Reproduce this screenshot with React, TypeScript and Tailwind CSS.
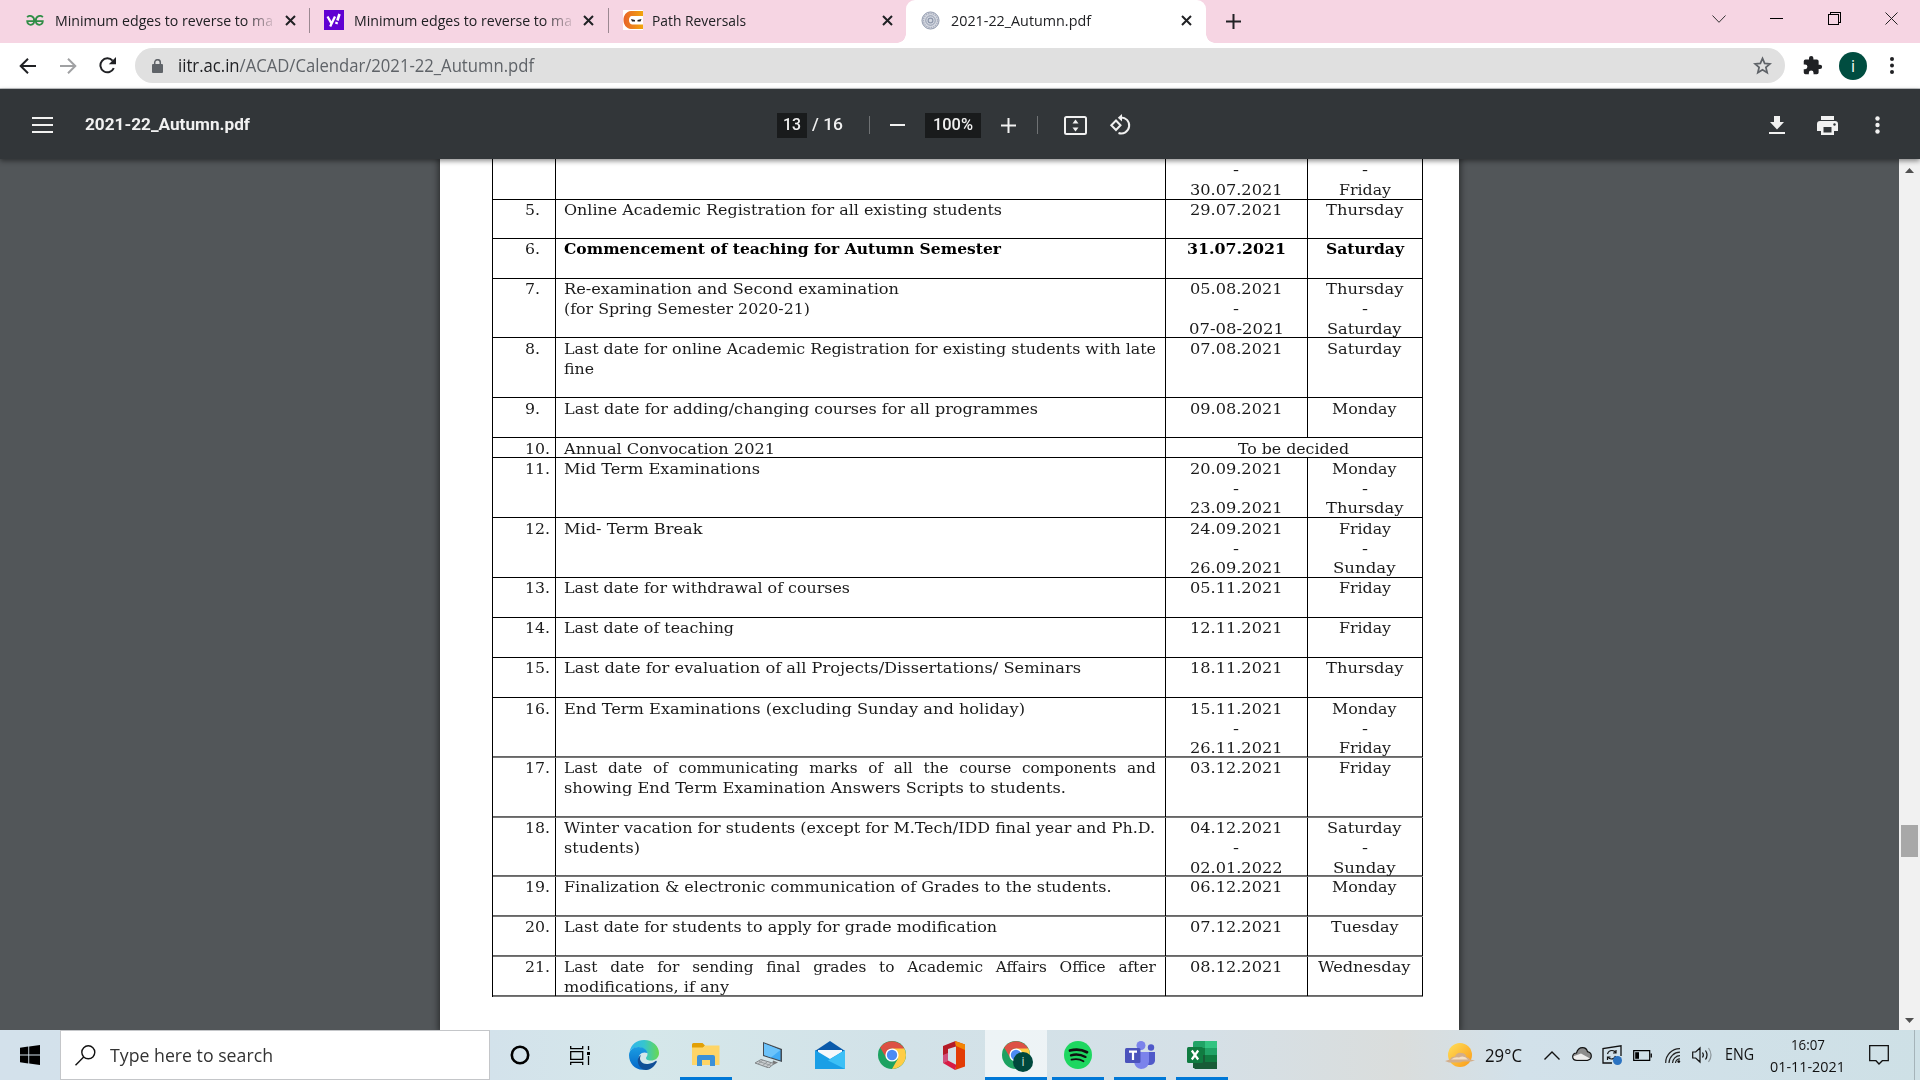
import { useLayoutEffect, useRef, useState, type ReactNode } from "react";

/* Text whose glyphs are condensed or widened so that the line is exactly `w` pixels long. */
function Fit({ w, className = "", children }: { w: number; className?: string; children: ReactNode }) {
  const ref = useRef<HTMLSpanElement>(null);
  const [scale, setScale] = useState(1);
  useLayoutEffect(() => {
    const el = ref.current;
    if (!el) return;
    const prev = el.style.transform;
    el.style.transform = "none";
    const natural = el.getBoundingClientRect().width;
    el.style.transform = prev;
    if (natural > 0) setScale(w / natural);
  }, [w]);
  return (
    <span className={"inline-block whitespace-nowrap text-left " + className} style={{ width: w }}>
      <span ref={ref} className="inline-block origin-left" style={{ transform: `scaleX(${scale})` }}>
        {children}
      </span>
    </span>
  );
}

type Line = { t: string; w: number; justify?: boolean };
type Row = { n: string; h: number; desc: Line[]; dates: string[]; days: string[]; bold?: boolean; soft?: boolean; merged?: boolean; low?: boolean };

const dayWidths: Record<string, number> = {
  Monday: 64.5,
  Tuesday: 67.5,
  Wednesday: 92.5,
  Thursday: 77.5,
  Friday: 52,
  Saturday: 74.5,
  Sunday: 62.5,
  "-": 6,
};

const rows: Row[] = [
  { n: "", h: 61, low: true, desc: [{ t: "Orientation programme for newly admitted students", w: 421 }], dates: ["29.07.2021", "-", "30.07.2021"], days: ["Thursday", "-", "Friday"] },
  { n: "5.", h: 39, desc: [{ t: "Online Academic Registration for all existing students", w: 438 }], dates: ["29.07.2021"], days: ["Thursday"] },
  { n: "6.", h: 40, bold: true, desc: [{ t: "Commencement of teaching for Autumn Semester", w: 437 }], dates: ["31.07.2021"], days: ["Saturday"] },
  { n: "7.", h: 59, desc: [{ t: "Re-examination and Second examination", w: 335 }, { t: "(for Spring Semester 2020-21)", w: 246 }], dates: ["05.08.2021", "-", "07-08-2021"], days: ["Thursday", "-", "Saturday"] },
  { n: "8.", h: 60, low: true, desc: [{ t: "Last date for online Academic Registration for existing students with late", w: 592 }, { t: "fine", w: 30 }], dates: ["07.08.2021"], days: ["Saturday"] },
  { n: "9.", h: 40, low: true, desc: [{ t: "Last date for adding/changing courses for all programmes", w: 474 }], dates: ["09.08.2021"], days: ["Monday"] },
  { n: "10.", h: 20, low: true, merged: true, desc: [{ t: "Annual Convocation 2021", w: 211 }], dates: ["To be decided"], days: [] },
  { n: "11.", h: 60, low: true, desc: [{ t: "Mid Term Examinations", w: 196 }], dates: ["20.09.2021", "-", "23.09.2021"], days: ["Monday", "-", "Thursday"] },
  { n: "12.", h: 60, low: true, desc: [{ t: "Mid- Term Break", w: 138.5 }], dates: ["24.09.2021", "-", "26.09.2021"], days: ["Friday", "-", "Sunday"] },
  { n: "13.", h: 40, desc: [{ t: "Last date for withdrawal of courses", w: 286 }], dates: ["05.11.2021"], days: ["Friday"] },
  { n: "14.", h: 40, desc: [{ t: "Last date of teaching", w: 170 }], dates: ["12.11.2021"], days: ["Friday"] },
  { n: "15.", h: 40, desc: [{ t: "Last date for evaluation of all Projects/Dissertations/ Seminars", w: 517 }], dates: ["18.11.2021"], days: ["Thursday"] },
  { n: "16.", h: 60, soft: true, low: true, desc: [{ t: "End Term Examinations (excluding Sunday and holiday)", w: 461 }], dates: ["15.11.2021", "-", "26.11.2021"], days: ["Monday", "-", "Friday"] },
  { n: "17.", h: 60, soft: true, desc: [{ t: "Last date of communicating marks of all the course components and", w: 592, justify: true }, { t: "showing End Term Examination Answers Scripts to students.", w: 502 }], dates: ["03.12.2021"], days: ["Friday"] },
  { n: "18.", h: 59, soft: true, desc: [{ t: "Winter vacation for students (except for M.Tech/IDD final year and Ph.D.", w: 591 }, { t: "students)", w: 76 }], dates: ["04.12.2021", "-", "02.01.2022"], days: ["Saturday", "-", "Sunday"] },
  { n: "19.", h: 40, soft: true, desc: [{ t: "Finalization & electronic communication of Grades to the students.", w: 547.5 }], dates: ["06.12.2021"], days: ["Monday"] },
  { n: "20.", h: 40, soft: true, desc: [{ t: "Last date for students to apply for grade modification", w: 433 }], dates: ["07.12.2021"], days: ["Tuesday"] },
  { n: "21.", h: 40, soft: true, desc: [{ t: "Last date for sending final grades to Academic Affairs Office after", w: 592, justify: true }, { t: "modifications, if any", w: 165 }], dates: ["08.12.2021"], days: ["Wednesday"] },
];

function dateWidth(d: string, bold?: boolean) {
  if (d === "-") return 6;
  if (d.includes("-")) return 95;
  return bold ? 99 : 92.5;
}

function TableRow({ r }: { r: Row }) {
  const weight = r.bold ? "font-bold text-black " : "";
  const pad = r.low ? "pt-px " : "";
  const lastLine = r.low && r.n ? "-mt-px" : "";
  return (
    <div
      className={"flex shrink-0 border-b " + (r.soft ? "border-[#777] shadow-[inset_0_-1px_0_#666]" : "border-black")}
      style={{ height: r.h }}
    >
      <div className={"w-[63px] border-r border-black pl-8 " + pad}>
        {r.n && <Fit w={r.n.length === 2 ? 15 : 25}>{r.n}</Fit>}
      </div>
      <div className={"flex w-[610px] flex-col border-r border-black pl-2 " + weight + pad}>
        {r.desc.map((l) =>
          l.justify ? (
            <div key={l.t} className="w-[538px] origin-left scale-x-110 whitespace-nowrap [text-align-last:justify]">
              {l.t}
            </div>
          ) : (
            <Fit key={l.t} w={l.w}>{l.t}</Fit>
          ),
        )}
      </div>
      {r.merged ? (
        <div className={"w-[257px] border-r border-black pr-[2px] text-center " + pad}>
          <Fit w={111}>To be decided</Fit>
        </div>
      ) : (
        <>
          <div className={"flex w-[142px] flex-col items-center border-r border-black pr-px " + weight + pad}>
            {r.dates.map((d, i) => (
              <Fit key={d} w={dateWidth(d, r.bold)} className={i === 2 ? lastLine : ""}>{d}</Fit>
            ))}
          </div>
          <div className={"flex w-[115px] flex-col items-center border-r border-black pr-px " + weight + pad}>
            {r.days.map((d, i) => (
              <Fit key={d} w={r.bold ? 78 : dayWidths[d]} className={i === 2 ? lastLine : ""}>{d}</Fit>
            ))}
          </div>
        </>
      )}
    </div>
  );
}

function CloseX() {
  return (
    <svg className="size-[11px] shrink-0" viewBox="0 0 11 11" stroke="#202124" strokeWidth="2">
      <path d="M1 1l9 9M10 1l-9 9" />
    </svg>
  );
}

function TabStrip() {
  return (
    <div className="flex h-[43px] bg-[#f6d5e3] text-[15px] leading-[42px] text-[#202124]">
      <div className="flex w-[311px] items-center pb-[3px] pl-[26px]">
        <svg className="mr-[11px] h-[11px] w-[18px] shrink-0" viewBox="0 0 18 11" fill="none" stroke="#2f8d46" strokeWidth="1.8">
          <path d="M1.2 2.2C3-.2 8.2 .8 8.2 5.5c0 5.600-6.800 5.600-7 .6h15.600c-.2 5-7 5-7-.6 0-4.700 5.200-5.700 7-3.300" />
        </svg>
        <div className="h-[42px] w-[218px] overflow-hidden [mask-image:linear-gradient(to_right,#000_190px,transparent_222px)]">
          <Fit w={218}>Minimum edges to reverse to ma</Fit>
        </div>
        <div className="ml-[12px]"><CloseX /></div>
        <div className="ml-[13px] h-[25px] w-px shrink-0 bg-[#9b8891]" />
      </div>
      <div className="flex w-[298px] items-center pb-[3px] pl-[13px]">
        <div className="mr-[10px] flex size-5 shrink-0 items-center justify-center bg-[#6001d2]">
          <svg className="size-4" viewBox="0 0 16 16" fill="none" stroke="#fff" strokeWidth="2.3">
            <path d="M1.500 4.500L5.200 11M9 4.500L4.200 14.500" />
            <path d="M13.500 2L11.400 8.500M10.900 10L10.200 12" strokeWidth="2.6" />
          </svg>
        </div>
        <div className="h-[42px] w-[218px] overflow-hidden [mask-image:linear-gradient(to_right,#000_190px,transparent_222px)]">
          <Fit w={218}>Minimum edges to reverse to ma</Fit>
        </div>
        <div className="ml-[11px]"><CloseX /></div>
        <div className="ml-[14px] h-[25px] w-px shrink-0 bg-[#9b8891]" />
      </div>
      <div className="flex w-[297px] items-center pb-[3px] pl-[14px]">
        <svg className="mr-[9px] size-5 shrink-0" viewBox="0 0 20 20">
          <defs>
            <linearGradient id="ninja" x1="0" x2="1">
              <stop offset="0" stopColor="#e8622a" />
              <stop offset="1" stopColor="#f2a50c" />
            </linearGradient>
          </defs>
          <path fill="#fff" d="M0 0h20v20H0z" />
          <path fill="url(#ninja)" d="M20 1v5H9C5 6 5 14 9 14.500h11V19H8C-2 18-2 2 8 1z" />
          <path fill="#fff" d="M8 6.500h12v7H8q-3-3.500 0-7z" />
          <path fill="#222" d="M8 9l4 1v1.500H9zM18.500 9l-4 1v1.500h3z" />
        </svg>
        <Fit w={94}>Path Reversals</Fit>
        <div className="ml-[136px]"><CloseX /></div>
      </div>
      <div className="relative flex w-[300px] items-center rounded-t-[9px] bg-white pb-[3px] pl-[15px]">
        <div className="absolute bottom-0 -left-[9px] size-[9px] bg-[radial-gradient(circle_at_0_0,transparent_8.5px,#fff_9px)]" />
        <div className="absolute -right-[9px] bottom-0 size-[9px] bg-[radial-gradient(circle_at_100%_0,transparent_8.5px,#fff_9px)]" />
        <svg className="mr-[11px] size-[19px] shrink-0" viewBox="0 0 20 20" fill="none" stroke="#8d97ab">
          <circle cx="10" cy="10" r="9" fill="#d4d8e1" strokeWidth="1" />
          <circle cx="10" cy="10" r="7.500" strokeWidth="1.5" strokeDasharray="1.5 1" stroke="#a9aebd" />
          <circle cx="10" cy="10" r="5" strokeWidth="1" />
          <circle cx="10" cy="10" r="2.500" strokeWidth="1.3" />
        </svg>
        <Fit w={140}>2021-22_Autumn.pdf</Fit>
        <div className="ml-[90px]"><CloseX /></div>
      </div>
      <div className="flex flex-1 items-center pl-5">
        <svg className="size-[15px]" viewBox="0 0 15 15" stroke="#202124" strokeWidth="2">
          <path d="M7.500 0v15M0 7.500h15" />
        </svg>
      </div>
      <div className="flex h-[37px] w-[208px] items-center justify-between pr-[22px]">
        <svg className="h-2 w-[14px]" viewBox="0 0 14 8" fill="none" stroke="#333"><path d="M.5 .5L7 7.300 13.500 .5" /></svg>
        <div className="h-px w-[13px] bg-black" />
        <svg className="h-[13px] w-[13px]" viewBox="0 0 13 13" fill="none" stroke="#000" shapeRendering="crispEdges">
          <path d="M.5 2.500h10v10H.5zM2.500 2.500V.5h10v10h-2" />
        </svg>
        <svg className="size-[13px]" viewBox="0 0 13 13" stroke="#222"><path d="M.5 .5l12 12M12.500 .5l-12 12" /></svg>
      </div>
    </div>
  );
}

function AddressBar() {
  return (
    <div className="flex h-[46px] items-center border-b border-[#c4c6c8] bg-white">
      <svg className="ml-[19px] h-4 w-[17px]" viewBox="0 0 17 16" fill="none" stroke="#202124" strokeWidth="2">
        <path d="M17 8H2M9 .8L1.700 8 9 15.200" />
      </svg>
      <svg className="ml-6 h-4 w-[17px]" viewBox="0 0 17 16" fill="none" stroke="#a0a1a3" strokeWidth="2">
        <path d="M0 8h15M8 .8L15.300 8 8 15.200" />
      </svg>
      <svg className="ml-[22px] size-[17px]" viewBox="0 0 17 17" fill="none">
        <path d="M14.800 11.200A7 7 0 1 1 13.600 3.600" stroke="#202124" strokeWidth="2" />
        <path d="M17 0v7.200H9.800z" fill="#202124" />
      </svg>
      <div className="ml-[19px] flex h-[35px] w-[1650px] items-center rounded-full bg-[#e0e0e0] pl-[17px]">
        <svg className="h-[14px] w-[11px]" viewBox="0 0 11 14">
          <path fill="#5f6368" d="M1 5h9q1 0 1 1v7q0 1-1 1H1q-1 0-1-1V6q0-1 1-1z" />
          <path d="M2.700 5.500V3.500a2.800 2.800 0 0 1 5.600 0v2" fill="none" stroke="#5f6368" strokeWidth="1.5" />
        </svg>
        <Fit w={356} className="ml-[15px] text-[17.5px] leading-[33px] text-[#5f6368]">
          <span className="text-[#202124]">iitr.ac.in</span>/ACAD/Calendar/2021-22_Autumn.pdf
        </Fit>
        <svg className="mr-[13px] ml-auto size-[19px]" viewBox="0 0 24 24" fill="none" stroke="#5f6368" strokeWidth="2.2">
          <path d="M12 3l2.700 6.300 6.800 .6-5.200 4.500 1.600 6.700L12 17.500l-5.900 3.600 1.600-6.700-5.200-4.500 6.800-.6z" />
        </svg>
      </div>
      <svg className="ml-[17px] size-[21px]" viewBox="0 0 24 24" fill="#202124">
        <path d="M20.500 11H19V7a2 2 0 0 0-2-2h-4V3.500a2.500 2.500 0 0 0-5 0V5H4a2 2 0 0 0-2 2v3.800h1.500a2.700 2.700 0 0 1 0 5.400H2V20a2 2 0 0 0 2 2h3.800v-1.500a2.700 2.700 0 0 1 5.400 0V22H17a2 2 0 0 0 2-2v-4h1.500a2.500 2.500 0 0 0 0-5z" />
      </svg>
      <div className="ml-4 flex size-7 items-center justify-center rounded-full bg-[#004d40] text-[16px] leading-none text-white">i</div>
      <svg className="ml-[23px] h-[17px] w-1" viewBox="0 0 4 17" fill="#202124">
        <circle cx="2" cy="2" r="2" /><circle cx="2" cy="8.5" r="2" /><circle cx="2" cy="15" r="2" />
      </svg>
    </div>
  );
}

function PdfToolbar() {
  return (
    <div className="relative z-10 flex h-[70px] items-center bg-[#323639] pt-[2px] font-['Roboto'] text-[17px] font-medium text-[#f1f1f1] shadow-[0_2px_5px_rgba(0,0,0,0.45)]">
      <div className="ml-8 flex w-[21px] flex-col gap-[5px]">
        <div className="h-[2px] bg-[#f1f1f1]" /><div className="h-[2px] bg-[#f1f1f1]" /><div className="h-[2px] bg-[#f1f1f1]" />
      </div>
      <Fit w={165} className="ml-8 font-bold">2021-22_Autumn.pdf</Fit>
      <div className="ml-[527px] flex h-[25px] w-[30px] items-center justify-center bg-[#191b1c]"><Fit w={18}>13</Fit></div>
      <Fit w={31} className="ml-[5px]">/ 16</Fit>
      <div className="ml-[26px] h-[18px] w-px bg-[#6f7274]" />
      <div className="ml-[20px] h-[2px] w-[15px] bg-[#f1f1f1]" />
      <div className="ml-5 flex h-[25px] w-[56px] items-center justify-center bg-[#191b1c]"><Fit w={40}>100%</Fit></div>
      <svg className="ml-5 size-[15px]" viewBox="0 0 15 15" stroke="#f1f1f1" strokeWidth="2"><path d="M7.500 0v15M0 7.500h15" /></svg>
      <div className="ml-[21px] h-[18px] w-px bg-[#6f7274]" />
      <svg className="ml-[26px] h-[19px] w-[23px]" viewBox="0 0 23 19">
        <rect x="1" y="1" width="21" height="17" rx="1.5" fill="none" stroke="#f1f1f1" strokeWidth="2" />
        <path d="M11.500 3.500l3 4h-6zM11.500 15.500l3-4h-6z" fill="#f1f1f1" />
      </svg>
      <svg className="ml-[22px] h-[22px] w-[22px]" viewBox="0 0 22 22" fill="none" stroke="#f1f1f1" strokeWidth="2">
        <path d="M7 6.500l4.500 4.800L7 16l-4.700-4.700z" />
        <path d="M11.500 3.500a8 8 0 1 1-2 15.500" />
        <path d="M13 0v7.500L8.800 3.700z" fill="#f1f1f1" stroke="none" />
      </svg>
      <svg className="ml-[638px] h-[18px] w-[16px]" viewBox="0 0 16 18" fill="#f1f1f1">
        <path d="M5 0h6v6h4l-7 7.500L1 6h4zM0 16h16v2H0z" />
      </svg>
      <svg className="ml-8 h-[19px] w-[21px]" viewBox="0 0 21 19" fill="#f1f1f1">
        <path d="M4 0h13v4H4zM3 5h15q3 0 3 3v7h-4v4H4v-4H0V8q0-3 3-3z" />
        <path fill="#323639" d="M6.500 11h8v5.500h-8z" /><circle cx="17.500" cy="8.500" r="1.2" fill="#323639" />
      </svg>
      <svg className="ml-[37px] h-[18px] w-[5px]" viewBox="0 0 5 18" fill="#f1f1f1">
        <circle cx="2.500" cy="2.500" r="2.2" /><circle cx="2.500" cy="9" r="2.2" /><circle cx="2.500" cy="15.500" r="2.2" />
      </svg>
    </div>
  );
}

function ChromeLogo({ className }: { className: string }) {
  return (
    <svg className={className} viewBox="0 0 28 28">
      <circle cx="14" cy="14" r="14" fill="#1da261" />
      <path d="M14 7h12.100A14 14 0 0 1 14 28l6-10.500z" fill="#ffcd46" />
      <path d="M1.900 7A14 14 0 0 1 26.100 7.400H14z" fill="#dd5144" />
      <path d="M2.200 6.600l5.800 10L14 7.400z" fill="#dd5144" />
      <circle cx="14" cy="14" r="6.6" fill="#fff" />
      <circle cx="14" cy="14" r="5.2" fill="#4c8bf5" />
    </svg>
  );
}

function Cell({ children, open, active }: { children: ReactNode; open?: boolean; active?: boolean }) {
  return (
    <div className={"relative flex h-full w-[62px] shrink-0 items-center justify-center " + (active ? "bg-white/60" : "")}>
      {children}
      {(open || active) && <div className={"absolute bottom-0 h-[3px] bg-[#0078d7] " + (active ? "inset-x-0" : "inset-x-[5px]")} />}
    </div>
  );
}

function Taskbar() {
  return (
    <div className="flex h-[50px] items-center bg-[linear-gradient(to_right,#d3e1eb_0px,#d3e2eb_490px,#d5e7ea_640px,#d2e2e8_900px,#d5e0e7_1200px,#dadddc_1400px,#d2e1ea_1520px,#cee0e6_1920px)] text-[#111]">
      <div className="flex w-[60px] justify-center">
        <svg className="size-5" viewBox="0 0 20 20" fill="#000">
          <path d="M0 2.800L8.300 1.600V9.500H0zM9.200 1.500L20 0v9.500H9.200zM0 10.500h8.300v7.900L0 17.200zM9.200 10.500H20V20L9.200 18.500z" />
        </svg>
      </div>
      <div className="-mr-px flex h-full w-[430px] items-center border border-[#c4c6c9] bg-white">
        <svg className="ml-[14px] size-[21px]" viewBox="0 0 21 21" fill="none" stroke="#111" strokeWidth="1.4">
          <circle cx="13.300" cy="7.300" r="6.5" /><path d="M8.700 12L.5 20.300" />
        </svg>
        <Fit w={163} className="ml-[14px] text-[17.5px] leading-[48px] text-[#333]">Type here to search</Fit>
      </div>
      <Cell>
        <svg className="size-[20px]" viewBox="0 0 20 20" fill="none" stroke="#000" strokeWidth="2.6"><circle cx="10" cy="10" r="8.2" /></svg>
      </Cell>
      <Cell>
        <svg className="mr-[4px] h-[19px] w-[20px]" viewBox="0 0 20 19" fill="none" stroke="#000" strokeWidth="1.3">
          <path d="M.7 0v2.700h12V0M.7 19v-2.700h12V19M.7 5.700h12v7.600H.7zM18.500 0v4M18.500 10v9" /><path d="M17 6h3v3h-3z" fill="#000" stroke="none" />
        </svg>
      </Cell>
      <Cell>
        <svg className="h-[30px] w-[30px]" viewBox="0 0 30 30">
          <defs>
            <linearGradient id="eg" x1="0" x2="1"><stop offset="0" stopColor="#2fb4ee" /><stop offset=".5" stopColor="#36c5cf" /><stop offset="1" stopColor="#68d94f" /></linearGradient>
            <linearGradient id="eb" x1="0" y1="0" x2="0" y2="1"><stop offset="0" stopColor="#1b9de2" /><stop offset="1" stopColor="#0567c8" /></linearGradient>
          </defs>
          <path d="M.5 12C2 4 8 0 15 0c9 0 15 6.500 15 13 0 5-4 7.500-8 7.500-4 0-5-1.500-5-2.500s1.500-1.500 1.500-4C18 10 14 7.500 9.500 7.500 5 7.500 1.500 9.500 .5 12z" fill="url(#eg)" />
          <path d="M0 15c0-5 4.500-8 9.500-8 5 0 8.500 3 9 6-6-2-9 2-9 6 0 5 4 9.500 10 9.500C9 33 0 25 0 15z" fill="url(#eb)" />
          <path d="M12 15c-3 5 1 10 8 8.700 3-.5 5-1.500 7-3 1 0 1 .8 .5 1.800C24 28.500 20 30 16.500 30 9 29 6 18 12 15z" fill="#114f97" />
        </svg>
      </Cell>
      <Cell open>
        <svg className="h-6 w-[28px]" viewBox="0 0 28 24">
          <path d="M0 1.500Q0 0 1.500 0h9L13 2.500 11 5H0z" fill="#e2a006" />
          <path d="M0 4.500h11L13 2.500h14.500V22H0z" fill="#fed567" />
          <path d="M5 23V14q0-2 2-2h14q2 0 2 2v9h-5v-6h-8v6z" fill="#3b91d8" />
        </svg>
      </Cell>
      <Cell>
        <svg className="h-[26px] w-[27px]" viewBox="0 0 27 26">
          <path d="M8 0l19 7v13L8 14z" fill="#444b52" /><path d="M9 1.500L25.500 8v10.500L9 13z" fill="#43acf5" /><path d="M9 1.500L25.500 8 16 15.500 9 13z" fill="#6cc3fa" />
          <path d="M18 18.500l5 2-6 3z" fill="#777" />
          <path d="M6 17.500l13 4-5 4.500L0 21z" fill="#c9cdcf" stroke="#82878a" /><path d="M4 19.500l12 4M8 18l-5 4M12 20l-5 4M16 21l-5 4" stroke="#8a8f92" strokeWidth=".8" />
        </svg>
      </Cell>
      <Cell>
        <svg className="h-[28px] w-[30px]" viewBox="0 0 30 28">
          <path d="M0 10L15 0l15 10v6H0z" fill="#0a5aaa" /><path d="M3 9h24v10H3z" fill="#f5f8fb" />
          <path d="M0 9l15 9L30 9v19H0z" fill="#1a9fe6" /><path d="M30 9L13 19.500 30 28z" fill="#3cc0f6" />
        </svg>
      </Cell>
      <Cell><ChromeLogo className="size-[28px]" /></Cell>
      <Cell>
        <svg className="mr-[2px] h-[29px] w-[23px]" viewBox="0 0 23 29">
          <path d="M13.500 0L1 5v17l5-2.500V8l8-2.500z" fill="#b51b26" /><path d="M13 0l10 3.500v22L13 29l1-5V5z" fill="#e23c06" />
          <path d="M13 0l10 3.500V9l-9-4z" fill="#f28404" /><path d="M1 22l5-2.500L14.500 24 13 29z" fill="#d81c45" /><path d="M1 14v8l5-2.500V12z" fill="#d0507b" />
        </svg>
      </Cell>
      <Cell active>
        <div className="relative size-[28px]">
          <ChromeLogo className="size-[28px]" />
          <div className="absolute top-[11px] left-[11px] flex size-5 items-center justify-center rounded-full bg-[#00483d] text-[12px] leading-none text-[#cfe0dc]">i</div>
        </div>
      </Cell>
      <Cell open>
        <svg className="size-[28px]" viewBox="0 0 28 28" fill="none" stroke="#111" strokeLinecap="round">
          <circle cx="14" cy="14" r="14" fill="#1ed760" stroke="none" />
          <path d="M6 9.500c6-1.700 12-1 17 1.700" strokeWidth="2.8" /><path d="M7 14.300c5-1.500 10-.8 14.500 1.600" strokeWidth="2.3" /><path d="M7.500 18.700c4.500-1.200 8.500-.6 12 1.500" strokeWidth="1.8" />
        </svg>
      </Cell>
      <Cell open>
        <svg className="h-[28px] w-[30px]" viewBox="0 0 30 28">
          <circle cx="26" cy="6.500" r="3.2" fill="#5059c9" /><path d="M21 11h9v9q-1 4-5 4h-4z" fill="#5059c9" />
          <circle cx="16" cy="4.500" r="4.5" fill="#7b83eb" /><path d="M9 11h15v10q-1 7-8 7-6-1-7-7z" fill="#7b83eb" />
          <rect x="0" y="7" width="15.500" height="15" rx="1.5" fill="#4b53bc" />
          <path d="M4 10.700h8M8 10.700V19" stroke="#fff" strokeWidth="2.2" />
        </svg>
      </Cell>
      <Cell open>
        <svg className="h-[28px] w-[30px]" viewBox="0 0 30 28">
          <path d="M8 0h10v7H6V2q0-2 2-2z" fill="#21a366" /><path d="M18 0h12v7H18z" fill="#33c481" />
          <path d="M6 7h12v7H6z" fill="#107c41" /><path d="M18 7h12v7H18z" fill="#21a366" />
          <path d="M6 14h12v13H6z" fill="#185c37" /><path d="M18 14h12v7H18z" fill="#107c41" /><path d="M16 21h14v7H8l-2-2v-5z" fill="#185c37" />
          <rect x="0" y="6" width="16" height="16" rx="1.5" fill="#107c41" />
          <path d="M4.800 9.500l6.400 9M11.200 9.500l-6.400 9" stroke="#fff" strokeWidth="2.2" />
        </svg>
      </Cell>
      <svg className="ml-[212px] h-6 w-[30px]" viewBox="0 0 30 24">
        <defs><linearGradient id="sun" x1="0" y1="0" x2="1" y2="1"><stop offset="0" stopColor="#ffdf5a" /><stop offset="1" stopColor="#fb9a16" /></linearGradient></defs>
        <circle cx="15" cy="12" r="12" fill="url(#sun)" />
        <path d="M0 18l5-1.500q1-3 5-3 2-4.500 6.500-3.500 4 0 5 4 3 .5 3.500 2.500l5 1-4 1H18l-3 1H4z" fill="#d3ae8a" /><path d="M6 16.500q4-3 8-2 5-2.500 9 2z" fill="#f3dfc6" />
      </svg>
      <Fit w={37} className="ml-[10px] text-[18px]">29°C</Fit>
      <svg className="ml-[22px] h-[9px] w-[16px]" viewBox="0 0 16 9" fill="none" stroke="#111" strokeWidth="1.4"><path d="M.5 8.500L8 1l7.500 7.500" /></svg>
      <svg className="mb-[2px] ml-3 h-[14px] w-[20px]" viewBox="0 0 20 14">
        <path d="M5 13.300q-4.300 0-4.300-3.600T4.500 6Q6 .7 10.500 .7q4 0 5 4 3.800 .8 3.800 4.300t-4 4.300z" fill="#8d8d8d" stroke="#111" strokeWidth="1.2" />
        <path d="M5 12.700q-4-.5-3.500-3.500L9 6.500l9 5-3 1.200z" fill="#eee" />
      </svg>
      <svg className="ml-[10px] h-5 w-[20px]" viewBox="0 0 20 20" fill="none" stroke="#111" strokeWidth="1.3">
        <path d="M10 18H1V3.500L19 .8V11" /><path d="M5.500 9q1-3.500 4.500-3.500 2.500 0 3.500 2M14 5v3h-3M13.500 11q-1 3-4 3-2.500 0-3.500-2M5.500 15v-3h3" strokeWidth="1.2" />
        <circle cx="15.500" cy="15.500" r="4.5" fill="#2b73c2" stroke="none" />
      </svg>
      <svg className="ml-[11px] h-[11px] w-[19px]" viewBox="0 0 19 11" fill="none" stroke="#000" strokeWidth="1.2">
        <path d="M.7 .7h16v9.600H.7zM18.300 3.500v4" /><path d="M2.200 2.200H6v6.600H2.200z" fill="#000" stroke="none" />
      </svg>
      <svg className="ml-[13px] h-[15px] w-[16px]" viewBox="0 0 16 15" fill="none" stroke="#222" strokeWidth="1.2">
        <path d="M.7 15A14 14 0 0 1 15 .7M4 15A11 11 0 0 1 15 4.200M7.500 15A7.500 7.500 0 0 1 15 7.700M10.500 15a4.500 4.500 0 0 1 4.500-4.200" /><circle cx="13.800" cy="13.600" r="1.4" fill="#111" stroke="none" />
      </svg>
      <svg className="ml-[11px] h-[18px] w-[21px]" viewBox="0 0 21 18" fill="none" stroke="#111" strokeWidth="1.2">
        <path d="M.7 6h3L8 2v14l-4.300-4h-3zM10.500 6.500q1.700 2.500 0 5M13.500 4.500q3 4.500 0 9" /><path d="M16.500 2q5 7 0 14" stroke="#8d979c" />
      </svg>
      <Fit w={29} className="ml-[12px] text-[15.5px]">ENG</Fit>
      <div className="ml-[16px] flex w-[75px] flex-col items-center gap-px text-[15px] leading-[21px]">
        <Fit w={34}>16:07</Fit>
        <Fit w={75}>01-11-2021</Fit>
      </div>
      <svg className="ml-6 h-5 w-5" viewBox="0 0 20 20" fill="none" stroke="#111" strokeWidth="1.3">
        <path d="M.7 .7h18.600v15h-6L10 19l-3-3.300H.7z" />
      </svg>
      <div className="ml-[25px] h-full w-px bg-[#a5b3b9]" />
    </div>
  );
}

export default function App() {
  return (
    <div className="flex h-[1080px] w-[1920px] flex-col overflow-hidden bg-[#525659] font-['Open_Sans','Noto_Sans',sans-serif]">
      <TabStrip />
      <AddressBar />
      <PdfToolbar />
      <div className="flex h-[871px] overflow-hidden">
        <div className="flex h-full w-[1899px] pl-[440px]">
          <div className="h-full w-[1019px] bg-white pl-[52px] shadow-[0_0_6px_2px_rgba(0,0,0,0.45)]">
            <div className="-mt-5 flex w-[931px] flex-col border-l border-black font-['DejaVu_Serif_Condensed','DejaVu_Serif',serif] text-[15.5px] leading-5 text-[#1a1a1a]">
              {rows.map((r) => (
                <TableRow key={r.n} r={r} />
              ))}
            </div>
          </div>
        </div>
        <div className="flex h-full w-[21px] flex-col items-center bg-[#f1f1f1]">
          <svg className="mt-[9px] h-[5px] w-[9px]" viewBox="0 0 9 5" fill="#505050"><path d="M0 5L4.500 0 9 5z" /></svg>
          <div className="mt-[652px] h-8 w-[17px] bg-[#a8a8a8]" />
          <svg className="mt-auto mb-[7px] h-[5px] w-[9px]" viewBox="0 0 9 5" fill="#505050"><path d="M0 0h9L4.500 5z" /></svg>
        </div>
      </div>
      <Taskbar />
    </div>
  );
}
